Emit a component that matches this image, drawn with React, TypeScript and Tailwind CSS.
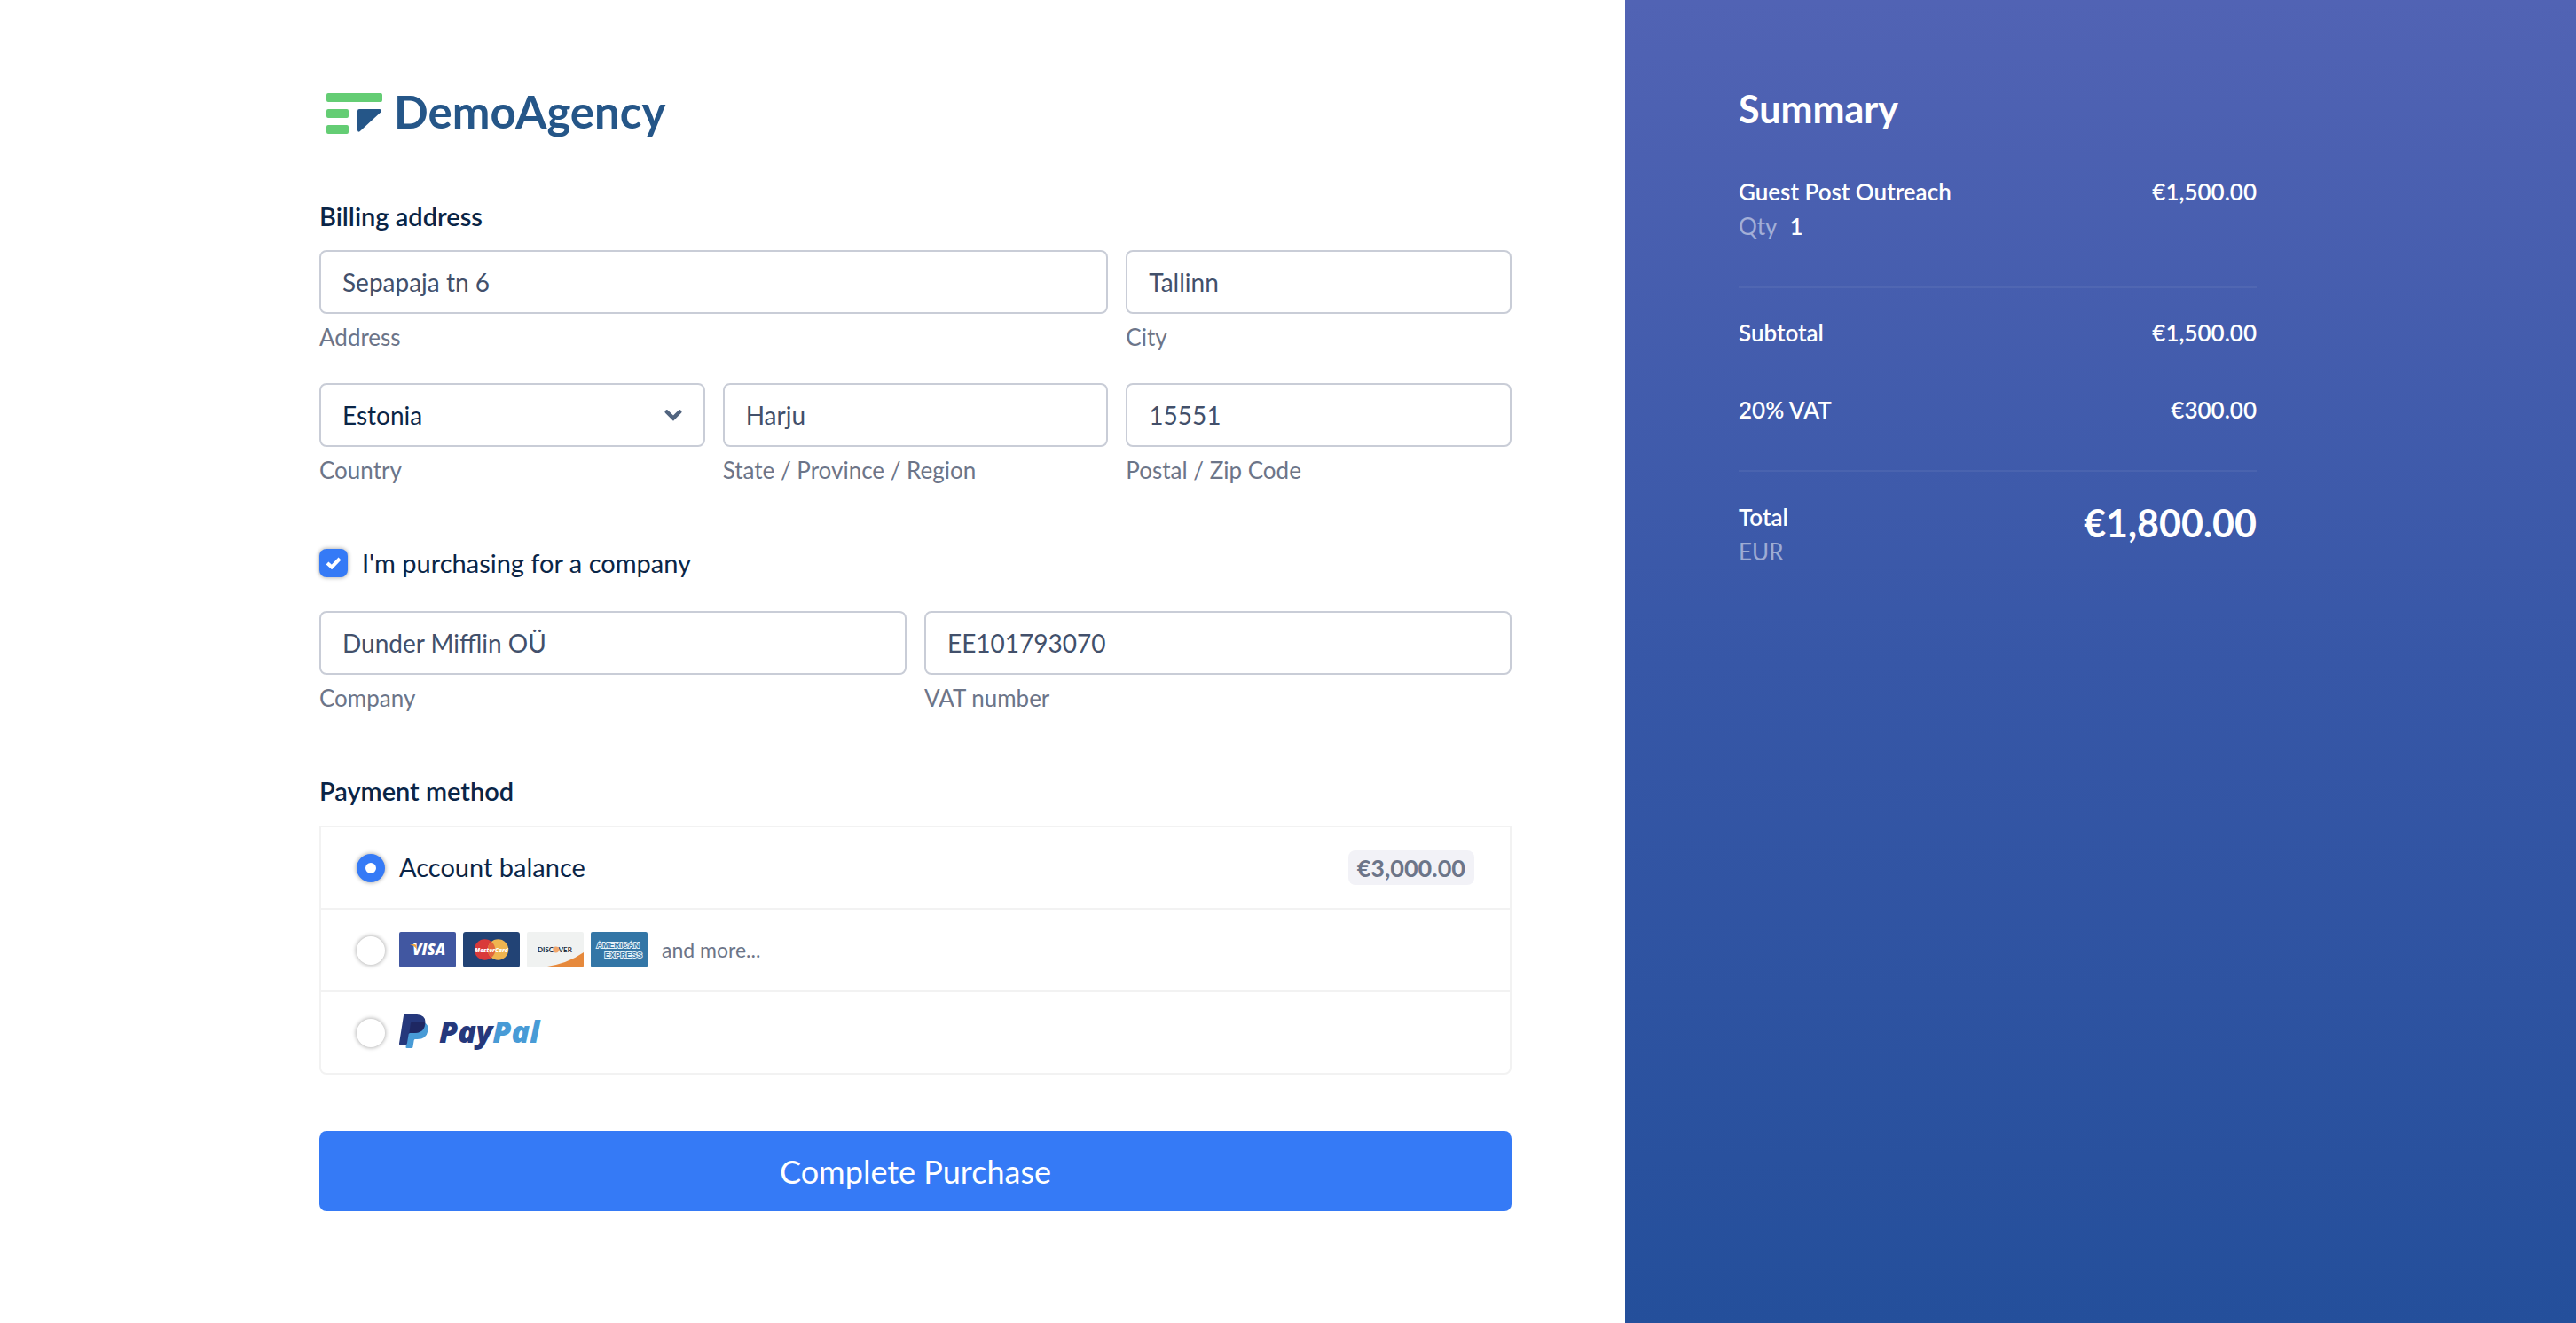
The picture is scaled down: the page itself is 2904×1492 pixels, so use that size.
import { useState, type ReactNode } from "react";

function BrandLogo() {
  return (
    <div className="flex h-[78px] items-center gap-3 pl-2">
      <svg width="64" height="48" viewBox="0 0 64 48" aria-hidden="true">
        <rect x="0" y="1" width="63" height="10" rx="2" fill="#64cd74" />
        <rect x="0" y="19" width="25" height="10" rx="2" fill="#64cd74" />
        <rect x="0" y="37" width="25" height="10" rx="2" fill="#64cd74" />
        <path d="M37 19h23q3.500 1 1.200 3.600L37.600 44.200Q35 45.600 35 42.600V21q0-2 2-2z" fill="#255688" />
      </svg>
      <span className="pb-1 text-[51px] font-bold leading-[60px] text-[#255688]">DemoAgency</span>
    </div>
  );
}

const boxClass =
  "h-[72px] w-full rounded-lg border-2 border-[#c9cdd7] bg-white px-6 text-[28px] leading-[42px] outline-none";
const captionClass = "mt-[7px] block text-[26px] leading-[39px] text-[#6c7589]";

function Field({
  id,
  label,
  value,
  className = "",
}: {
  id: string;
  label: string;
  value: string;
  className?: string;
}) {
  return (
    <div className={className}>
      <input id={id} defaultValue={value} className={`${boxClass} text-[#42506b]`} />
      <label htmlFor={id} className={captionClass}>
        {label}
      </label>
    </div>
  );
}

function CountryField() {
  return (
    <div>
      <div className="grid items-center">
        <select
          id="country"
          defaultValue="Estonia"
          className={`${boxClass} col-start-1 row-start-1 appearance-none text-[#0a2547]`}
        >
          <option>Estonia</option>
          <option>Finland</option>
          <option>Latvia</option>
        </select>
        <svg
          className="pointer-events-none col-start-1 row-start-1 mr-[26px] justify-self-end"
          width="20"
          height="14"
          viewBox="0 0 20 14"
          fill="none"
          aria-hidden="true"
        >
          <path d="M2.800 3.500 10 10.500l7.200-7" stroke="#51647f" strokeWidth="4.500" strokeLinecap="round" />
        </svg>
      </div>
      <label htmlFor="country" className={captionClass}>
        Country
      </label>
    </div>
  );
}

function VisaCard() {
  return (
    <svg width="64" height="40" viewBox="0 0 64 40" aria-label="Visa">
      <rect width="64" height="40" rx="2" fill="#4157a1" />
      <text x="15" y="26" fontFamily="Open Sans, sans-serif" fontSize="17" fontWeight="800" fontStyle="italic" fill="#fff">
        VISA
      </text>
      <path d="M12 14h5.500q1.500.2 1.900 2l1 4Q17.500 15.500 12 14z" fill="#efa640" />
    </svg>
  );
}

function MasterCard() {
  return (
    <svg width="64" height="40" viewBox="0 0 64 40" aria-label="MasterCard">
      <rect width="64" height="40" rx="3" fill="#224375" />
      <circle cx="24.500" cy="20" r="11.700" fill="#d93a3a" />
      <circle cx="39.500" cy="20" r="11.700" fill="#efb550" />
      <path d="M32 11a11.700 11.700 0 0 1 0 18a11.700 11.700 0 0 1 0-18z" fill="#e2673c" />
      <text
        x="32"
        y="23"
        textAnchor="middle"
        fontFamily="Open Sans, sans-serif"
        fontSize="6.500"
        fontWeight="800"
        fontStyle="italic"
        fill="#fff"
      >
        MasterCard
      </text>
    </svg>
  );
}

function DiscoverCard() {
  return (
    <svg width="64" height="40" viewBox="0 0 64 40" aria-label="Discover">
      <rect width="64" height="40" rx="2" fill="#f0f2f1" />
      <path d="M64 23v15q0 2-2 2H18Q46 36 64 23z" fill="#e6893c" />
      <g fontFamily="Lato, sans-serif" fontSize="8" fontWeight="700" fill="#1a2b3c">
        <text x="12" y="23">DISC</text>
        <text x="35.500" y="23">VER</text>
      </g>
      <circle cx="32.700" cy="20" r="3.400" fill="#f2a66b" />
    </svg>
  );
}

function AmexCard() {
  return (
    <svg width="64" height="40" viewBox="0 0 64 40" aria-label="American Express">
      <rect width="64" height="40" rx="2" fill="#3376a6" />
      <g
        fontFamily="Liberation Sans, sans-serif"
        fontSize="9"
        fontWeight="700"
        fill="#3376a6"
        stroke="#e4f0f7"
        strokeWidth="1.800"
        paintOrder="stroke"
      >
        <text x="6.500" y="18">AMERICAN</text>
        <text x="15.500" y="28.500">EXPRESS</text>
      </g>
    </svg>
  );
}

function PayPalLogo() {
  return (
    <svg width="162" height="42" viewBox="0 0 162 42" aria-label="PayPal">
      <path d="M12 10h16q6 3 4.500 9.500Q30.500 29 20.500 29h-2.300q-1.200 0-1.500 1.300l-1.300 7.600q-.2 1.100-1.400 1.100H8.500q-1.200 0-1-1.200z" fill="#489bd6" />
      <path d="M6.500 1H20q9.500.5 9.500 8.500Q29.500 22 16.500 22h-4.300q-1.200 0-1.500 1.300L8.900 33.700Q8.700 35 7.500 35H1q-1.200 0-1-1.200L5 2.300Q5.300 1 6.500 1z" fill="#25387c" />
      <path d="M14 10h14.800Q29 22 16.500 22h-4.300q-.5 0-.9.400l1.500-11q.2-1.400 1.200-1.400z" fill="#1e2762" />
      <text x="45" y="33" fontFamily="Open Sans, sans-serif" fontSize="34" fontWeight="800" fontStyle="italic" fill="#25387c">
        Pay<tspan fill="#489bd6">Pal</tspan>
      </text>
    </svg>
  );
}

function MethodRow({
  id,
  checked,
  onSelect,
  children,
  aside,
}: {
  id: string;
  checked: boolean;
  onSelect: () => void;
  children: ReactNode;
  aside?: ReactNode;
}) {
  return (
    <div className="box-content flex h-[91px] items-center">
      <input
        type="radio"
        name="method"
        id={id}
        checked={checked}
        onChange={onSelect}
        className="ml-10 size-8 appearance-none rounded-full bg-white shadow-[0_0_4px_1px_rgba(0,0,0,0.28)] checked:border-10 checked:border-[#357af6]"
      />
      <label
        htmlFor={id}
        className="mr-10 flex flex-1 items-center gap-2 pb-[2px] pl-4 text-[29px] leading-[42px] text-[#0a2547]"
      >
        {children}
      </label>
      {aside}
    </div>
  );
}

function SummaryRow({ label, value }: { label: string; value: string }) {
  return (
    <div className="flex justify-between">
      <dt>{label}</dt>
      <dd>{value}</dd>
    </div>
  );
}

export default function App() {
  const [method, setMethod] = useState("balance");
  const [company, setCompany] = useState(true);

  return (
    <div className="grid min-h-screen grid-cols-[1832fr_1072fr] bg-white font-['Lato',sans-serif]">
      <main className="flex justify-end px-32 pt-[89px] pb-[126px]">
        <form className="w-full max-w-[1344px]" onSubmit={(e) => e.preventDefault()}>
          <BrandLogo />

          <h2 className="mt-14 text-[29px] font-semibold leading-[42px] text-[#0a2547]">Billing address</h2>
          <div className="mt-[17px] grid grid-cols-3 gap-x-5 gap-y-8">
            <Field id="address" label="Address" value="Sepapaja tn 6" className="col-span-2" />
            <Field id="city" label="City" value="Tallinn" />
            <CountryField />
            <Field id="state" label="State / Province / Region" value="Harju" />
            <Field id="zip" label="Postal / Zip Code" value="15551" />
          </div>

          <div className="mt-16 flex items-center gap-4">
            <div className="grid place-items-center">
              <input
                id="company-purchase"
                type="checkbox"
                checked={company}
                onChange={(e) => setCompany(e.target.checked)}
                className="col-start-1 row-start-1 size-8 appearance-none rounded-lg bg-white shadow-[0_0_4px_1px_rgba(0,0,0,0.28)] checked:bg-[#357af6]"
              />
              <svg
                className="pointer-events-none col-start-1 row-start-1"
                width="18"
                height="14"
                viewBox="0 0 18 14"
                fill="none"
                aria-hidden="true"
              >
                <path d="M2 7l5 4.500L16 2" stroke="#fff" strokeWidth="4" />
              </svg>
            </div>
            <label htmlFor="company-purchase" className="text-[29px] leading-[42px] text-[#0a2547]">
              I'm purchasing for a company
            </label>
          </div>
          <div className="mt-[33px] grid grid-cols-2 gap-x-5">
            <Field id="company" label="Company" value="Dunder Mifflin OÜ" />
            <Field id="vat" label="VAT number" value="EE101793070" />
          </div>

          <fieldset className="mt-16">
            <legend className="text-[29px] font-semibold leading-[42px] text-[#0a2547]">Payment method</legend>
            <div className="mt-[18px] divide-y-2 divide-[#f2f2f2] rounded-b-lg border-2 border-[#f2f2f2]">
              <MethodRow
                id="balance"
                checked={method === "balance"}
                onSelect={() => setMethod("balance")}
                aside={
                  <span className="mr-10 rounded-lg bg-[#f2f2f7] px-[10px] text-[27px] font-bold leading-[39px] text-[#6c7589]">
                    €3,000.00
                  </span>
                }
              >
                Account balance
              </MethodRow>
              <MethodRow id="card" checked={method === "card"} onSelect={() => setMethod("card")}>
                <VisaCard />
                <MasterCard />
                <DiscoverCard />
                <AmexCard />
                <span className="pl-2 text-[23px] leading-[36px] text-[#6c7589]">and more...</span>
              </MethodRow>
              <MethodRow id="paypal" checked={method === "paypal"} onSelect={() => setMethod("paypal")}>
                <PayPalLogo />
              </MethodRow>
            </div>
          </fieldset>

          <button
            type="submit"
            className="mt-16 h-[90px] w-full rounded-lg bg-[#357af6] text-[36px] leading-[54px] text-white"
          >
            Complete Purchase
          </button>
        </form>
      </main>

      <aside className="bg-linear-to-b from-[#5163b4] via-[#3757a7] to-[#244f9b] px-32 pt-[91px] text-white">
        <div className="max-w-[584px]">
          <h2 className="text-[43px] font-bold leading-[63px]">Summary</h2>
          <dl className="mt-[43px] text-[26px] font-semibold leading-[39px]">
            <SummaryRow label="Guest Post Outreach" value="€1,500.00" />
            <div className="flex gap-[14px]">
              <dt className="font-normal text-white/50">Qty</dt>
              <dd>1</dd>
            </div>
            <div className="mt-12 flex flex-col gap-12 border-y-2 border-white/6 pt-[31px] pb-12">
              <SummaryRow label="Subtotal" value="€1,500.00" />
              <SummaryRow label="20% VAT" value="€300.00" />
            </div>
            <div className="mt-8 flex items-start justify-between">
              <dt>
                Total
                <span className="block font-normal text-white/50">EUR</span>
              </dt>
              <dd className="text-[43px] font-bold leading-[52px]">€1,800.00</dd>
            </div>
          </dl>
        </div>
      </aside>
    </div>
  );
}
